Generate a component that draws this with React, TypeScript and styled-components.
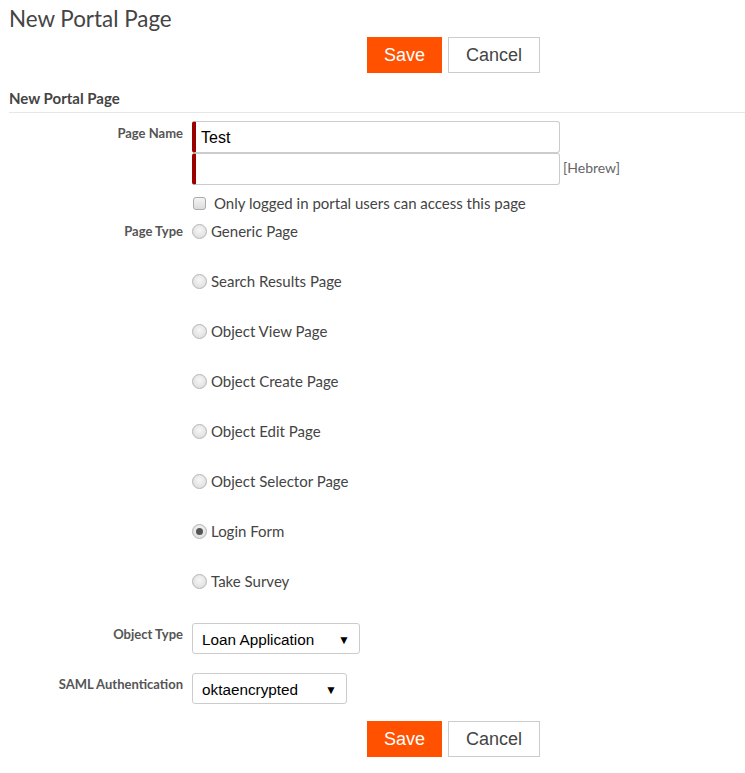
import React from "react";
import styled, { createGlobalStyle } from "styled-components";

const Global = createGlobalStyle`
  html, body { margin: 0; padding: 0; background: #fff; }
  body { font-family: Lato, "Open Sans", sans-serif; color: #444; }
`;

const Page = styled.div`
  padding: 0 0 0 9px;
  width: 736px;
`;

const Title = styled.h1`
  margin: 0;
  padding-top: 6px;
  height: 31px;
  font-size: 22.4px;
  font-weight: 400;
  line-height: 26px;
  color: #444;
`;

const ButtonBar = styled.div<{ $top: number }>`
  display: flex;
  gap: 6px;
  margin-top: ${(p) => p.$top}px;
  padding-left: 358px;
`;

const Button = styled.button<{ $primary?: boolean }>`
  height: 36px;
  width: ${(p) => (p.$primary ? 75 : 92)}px;
  font-family: "Liberation Sans", Arial, sans-serif;
  font-size: 18px;
  border: 1px solid ${(p) => (p.$primary ? "#ff5100" : "#ccc")};
  background: ${(p) => (p.$primary ? "#ff5100" : "#fff")};
  color: ${(p) => (p.$primary ? "#fff" : "#444")};
  padding: 0;
  border-radius: 0;
  cursor: pointer;
`;

const SectionTitle = styled.div`
  margin-top: 16px;
  font-size: 15px;
  font-weight: 700;
  color: #444;
  line-height: 18px;
  padding-bottom: 5px;
  border-bottom: 1px solid #e6e6e6;
`;

const Row = styled.div<{ $top: number }>`
  display: grid;
  grid-template-columns: 174px 1fr;
  column-gap: 9px;
  margin-top: ${(p) => p.$top}px;
  align-items: start;
`;

const Label = styled.div<{ $pt: number }>`
  text-align: right;
  font-size: 13px;
  font-weight: 700;
  color: #555;
  padding-top: ${(p) => p.$pt}px;
  line-height: 16px;
  white-space: nowrap;
`;

const Controls = styled.div`
  display: flex;
  flex-direction: column;
`;

const InputLine = styled.div`
  display: flex;
  align-items: center;
  gap: 3px;
`;

const TextInput = styled.input`
  box-sizing: border-box;
  width: 368px;
  height: 32px;
  border: 1px solid #ccc;
  border-left: 4px solid #990000;
  border-radius: 3px;
  font-family: "Liberation Sans", Arial, sans-serif;
  font-size: 16px;
  color: #000;
  padding: 2px 5px 0;
  outline: none;
`;

const LangTag = styled.span`
  font-size: 14px;
  color: #666;
  margin-top: -3px;
`;

const CheckRow = styled.label`
  display: flex;
  align-items: center;
  gap: 8px;
  margin-top: 11px;
  font-size: 15px;
  color: #444;
  line-height: 15px;
  padding-left: 1px;
`;

const Box = styled.span`
  box-sizing: border-box;
  width: 13px;
  height: 13px;
  border: 1px solid #aaa;
  border-radius: 3px;
  background: linear-gradient(#f4f4f4, #dcdcdc);
`;

const RadioList = styled.div`
  display: flex;
  flex-direction: column;
  gap: 34px;
`;

const RadioItem = styled.label`
  display: flex;
  align-items: center;
  gap: 4px;
  height: 16px;
  font-size: 15px;
  color: #444;
`;

const Dot = styled.span<{ $on?: boolean }>`
  box-sizing: border-box;
  width: 15px;
  height: 15px;
  border-radius: 50%;
  border: 1px solid #b5b5b5;
  background: radial-gradient(circle at 50% 40%, #f7f7f7, #d8d8d8);
  display: flex;
  align-items: center;
  justify-content: center;
  &::after {
    content: "";
    display: ${(p) => (p.$on ? "block" : "none")};
    width: 7px;
    height: 7px;
    border-radius: 50%;
    background: #555;
  }
`;

const Select = styled.div<{ $w: number }>`
  box-sizing: border-box;
  width: ${(p) => p.$w}px;
  height: 31px;
  border: 1px solid #ccc;
  border-radius: 3px;
  display: flex;
  align-items: center;
  justify-content: space-between;
  padding: 2px 9px 0 9px;
  font-family: "Liberation Sans", Arial, sans-serif;
  font-size: 15.3px;
  color: #000;
`;

const Arrow = styled.span`
  font-size: 12px;
  color: #000;
`;

const pageTypes = [
  "Generic Page",
  "Search Results Page",
  "Object View Page",
  "Object Create Page",
  "Object Edit Page",
  "Object Selector Page",
  "Login Form",
  "Take Survey",
];

export default function App() {
  return (
    <Page>
      <Global />
      <Title>New Portal Page</Title>
      <ButtonBar $top={0}>
        <Button $primary>Save</Button>
        <Button>Cancel</Button>
      </ButtonBar>
      <SectionTitle>New Portal Page</SectionTitle>
      <Row $top={8}>
        <Label $pt={4}>Page Name</Label>
        <Controls>
          <TextInput defaultValue="Test" />
          <InputLine>
            <TextInput defaultValue="" />
            <LangTag>[Hebrew]</LangTag>
          </InputLine>
          <CheckRow>
            <Box />
            Only logged in portal users can access this page
          </CheckRow>
        </Controls>
      </Row>
      <Row $top={12}>
        <Label $pt={0}>Page Type</Label>
        <RadioList>
          {pageTypes.map((t) => (
            <RadioItem key={t}>
              <Dot $on={t === "Login Form"} />
              {t}
            </RadioItem>
          ))}
        </RadioList>
      </Row>
      <Row $top={34}>
        <Label $pt={3}>Object Type</Label>
        <Select $w={168}>
          Loan Application <Arrow>▼</Arrow>
        </Select>
      </Row>
      <Row $top={19}>
        <Label $pt={3}>SAML Authentication</Label>
        <Select $w={155}>
          oktaencrypted <Arrow>▼</Arrow>
        </Select>
      </Row>
      <ButtonBar $top={17}>
        <Button $primary>Save</Button>
        <Button>Cancel</Button>
      </ButtonBar>
    </Page>
  );
}
